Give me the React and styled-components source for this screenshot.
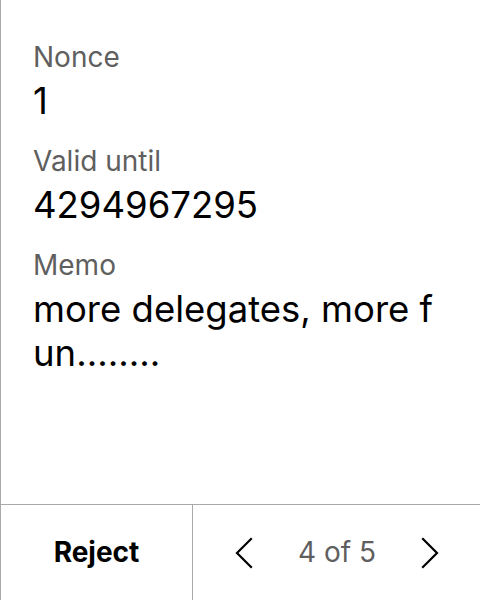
import React from "react";
import styled, { createGlobalStyle } from "styled-components";

const Global = createGlobalStyle`
  html, body {
    margin: 0;
    padding: 0;
    background: #fff;
  }
  body {
    font-family: Inter, "Noto Sans", sans-serif;
  }
`;

const Wrapper = styled.div`
  display: flex;
  flex-flow: column nowrap;
  width: 480px;
  height: 600px;
  box-sizing: border-box;
  border-left: 1px solid #aaa;
  background: white;
`;

const Details = styled.div`
  flex: 1;
  display: flex;
  flex-flow: column nowrap;
  gap: 20px;
  padding: 39px 33px 0 32px;
`;

const Field = styled.div`
  display: flex;
  flex-flow: column nowrap;
  gap: 4px;
`;

const Label = styled.div`
  font-size: 28px;
  line-height: 36px;
  color: #5f5f5f;
`;

const Value = styled.div`
  font-size: 36.5px;
  line-height: 44px;
  color: #000;
  word-break: break-all;
`;

const Footer = styled.div`
  display: flex;
  height: 96px;
  box-sizing: border-box;
  border-top: 1px solid #aaa;
`;

const RejectButton = styled.button`
  width: 192px;
  box-sizing: border-box;
  border: 0;
  border-right: 1px solid #aaa;
  background: none;
  font-family: inherit;
  font-size: 28px;
  font-weight: 700;
  color: #000;
  padding: 0 0 2px;
`;

const Pager = styled.div`
  flex: 1;
  display: flex;
  align-items: center;
  justify-content: space-between;
  padding: 0 41px 0 42px;
`;

const Arrow = styled.button`
  display: flex;
  border: 0;
  background: none;
  padding: 0;
`;

const Count = styled.span`
  font-size: 28px;
  color: #5f5f5f;
  padding-bottom: 2px;
`;

function Chevron({ dir }) {
  const d = dir === "left" ? "M16 2 L2 16 L16 30" : "M2 2 L16 16 L2 30";
  return (
    <svg width="18" height="32" viewBox="0 0 18 32" fill="none">
      <path d={d} stroke="#000" strokeWidth="2.2" strokeLinecap="square" />
    </svg>
  );
}

const fields = [
  { label: "Nonce", value: "1" },
  { label: "Valid until", value: "4294967295" },
  { label: "Memo", value: "more delegates, more fun........" },
];

export default function App() {
  return (
    <>
      <Global />
      <Wrapper>
        <Details>
          {fields.map((f) => (
            <Field key={f.label}>
              <Label>{f.label}</Label>
              <Value>{f.value}</Value>
            </Field>
          ))}
        </Details>
        <Footer>
          <RejectButton>Reject</RejectButton>
          <Pager>
            <Arrow>
              <Chevron dir="left" />
            </Arrow>
            <Count>4 of 5</Count>
            <Arrow>
              <Chevron dir="right" />
            </Arrow>
          </Pager>
        </Footer>
      </Wrapper>
    </>
  );
}
